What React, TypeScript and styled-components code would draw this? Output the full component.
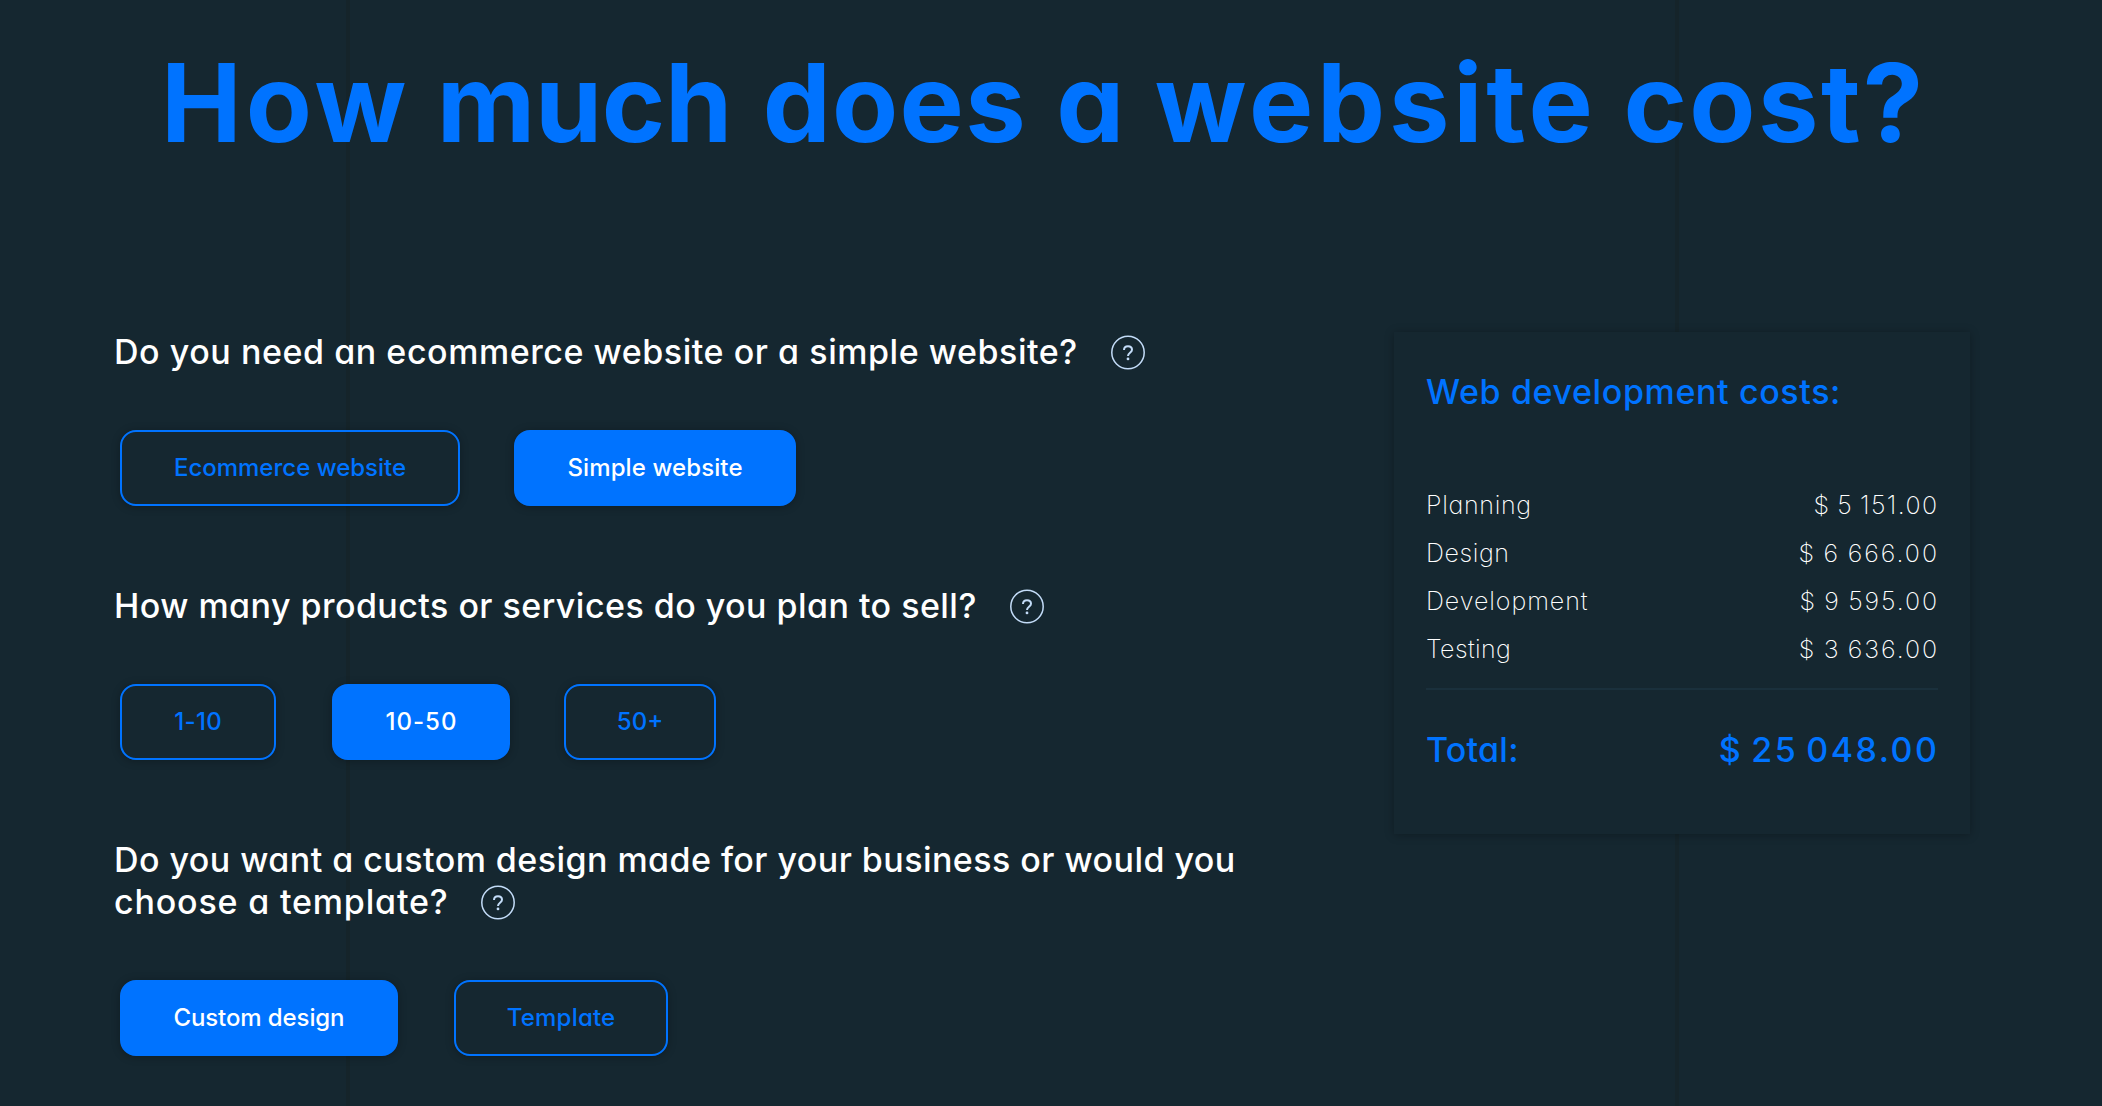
import React from 'react';
import styled, { createGlobalStyle, css } from 'styled-components';

const GlobalStyle = createGlobalStyle`
  * {
    box-sizing: border-box;
  }

  body {
    margin: 0;
    background: #152730;
    color: #fff;
    font-family: Inter, Lato, sans-serif;
    font-feature-settings: 'cv11';
  }
`;

const Page = styled.main`
  height: 1106px;
  overflow: hidden;
  background:
    linear-gradient(#15242a, #15242a) 346px 0 / 4px 100% no-repeat,
    linear-gradient(#15242a, #15242a) 1675px 0 / 4px 100% no-repeat,
    #152730;
`;

const Title = styled.h1`
  display: flex;
  gap: 30.5px;
  height: 331px;
  margin: 0;
  padding: 37px 0 0 161px;
  color: #0073ff;
  font-size: 108px;
  line-height: 131px;
  font-weight: 700;
  white-space: nowrap;
`;

interface SpacedProps {
  readonly $spacing?: number;
  readonly $wordSpacing?: number;
}

// The negative margin takes back the spacing after the last letter.
const Spaced = styled.span<SpacedProps>`
  margin-right: ${props => -(props.$spacing ?? 0)}px;
  letter-spacing: ${props => props.$spacing ?? 0}px;
  word-spacing: ${props => props.$wordSpacing ?? 0}px;
`;

const Columns = styled.div`
  display: flex;
  align-items: flex-start;
  justify-content: space-between;
  padding: 0 132px 0 114px;
`;

const Questions = styled.div`
  width: 1160px;
`;

const Question = styled.section`
  margin-bottom: 79px;
`;

const QuestionTitle = styled.h2`
  margin: 0 0 57px;
  font-size: 34px;
  line-height: 42px;
  font-weight: 500;
  white-space: nowrap;
`;

const HelpIcon = styled.svg`
  width: 36px;
  height: 36px;
  margin-left: 32.5px;
  vertical-align: -7px;
`;

const Options = styled.div`
  display: flex;
  gap: 54px;
  padding-left: 6px;
`;

interface OptionProps {
  readonly $width: number;
  readonly $offset?: number;
  readonly $active?: boolean;
}

const Option = styled.button<OptionProps>`
  width: ${props => props.$width}px;
  height: 76px;
  margin-left: ${props => props.$offset ?? 0}px;
  padding: 0 0 1px;
  border: 2px solid #0073ff;
  border-radius: 16px;
  background: transparent;
  box-shadow: 0 1px 8px rgba(0, 0, 0, 0.28);
  color: #0073ff;
  font: inherit;
  font-size: 24px;
  font-weight: 500;

  ${props =>
    props.$active &&
    css`
      background: #0073ff;
      color: #fff;
    `}
`;

const Summary = styled.aside`
  width: 576px;
  height: 502px;
  margin-top: 1px;
  padding: 36px 32px;
  background: #152730;
  box-shadow: 0 1px 9px rgba(0, 0, 0, 0.28);
`;

const SummaryTitle = styled.h3`
  margin: 0 0 65px;
  color: #0073ff;
  font-size: 34px;
  line-height: 48px;
  font-weight: 500;
`;

const CostRow = styled.div`
  display: flex;
  justify-content: space-between;
  font-size: 25px;
  line-height: 48px;
  font-weight: 250;
`;

const TotalRow = styled(CostRow)`
  margin-top: 15px;
  padding-top: 36px;
  border-top: 2px solid #1a303c;
  color: #0073ff;
  font-size: 34px;
  font-weight: 500;
`;

const Price = styled(Spaced)`
  padding-right: 1px;
`;

const titleWords = [
  { text: 'How', spacing: 4 },
  { text: 'much', spacing: -0.4 },
  { text: 'does', spacing: 1.3 },
  { text: 'a', spacing: 0 },
  { text: 'website', spacing: 3.8 },
  { text: 'cost?', spacing: 2.4 },
];

const questions = [
  {
    lines: [{ text: 'Do you need an ecommerce website or a simple website?', spacing: 0.55 }],
    options: [
      { label: 'Ecommerce website', width: 340 },
      { label: 'Simple website', width: 282, spacing: 0.1, active: true },
    ],
  },
  {
    lines: [{ text: 'How many products or services do you plan to sell?', spacing: 0.46 }],
    options: [
      { label: '1-10', width: 156, spacing: 0.4 },
      { label: '10-50', width: 178, offset: 2, spacing: 1, active: true },
      { label: '50+', width: 152 },
    ],
  },
  {
    lines: [
      { text: 'Do you want a custom design made for your business or would you', spacing: 0.45 },
      { text: 'choose a template?', spacing: 0.82 },
    ],
    options: [
      { label: 'Custom design', width: 278, spacing: -0.1, active: true },
      { label: 'Template', width: 214, offset: 2, spacing: 0.2 },
    ],
  },
];

const costs = [
  { label: 'Planning', spacing: 0.7, price: '$ 5 151.00', priceSpacing: 1.4 },
  { label: 'Design', spacing: 0.6, price: '$ 6 666.00', priceSpacing: 2 },
  { label: 'Development', spacing: 0.95, price: '$ 9 595.00', priceSpacing: 1.9 },
  { label: 'Testing', spacing: 0.4, price: '$ 3 636.00', priceSpacing: 1.9 },
];

const Help = () => (
  <HelpIcon viewBox="0 0 36 36" fill="none" stroke="#c3dcf8" strokeWidth="1.5">
    <circle cx="18" cy="17.5" r="16.2" />
    <path d="M14 14.9c0-2.3 1.6-3.7 4-3.7s4 1.4 4 3.5c0 3-4 3.2-4 6.2" strokeWidth="2" />
    <circle cx="18" cy="23.9" r="1.4" fill="#c3dcf8" stroke="none" />
  </HelpIcon>
);

const App = () => (
  <>
    <GlobalStyle />
    <Page>
      <Title>
        {titleWords.map(({ text, spacing }) => (
          <Spaced key={text} $spacing={spacing}>
            {text}
          </Spaced>
        ))}
      </Title>
      <Columns>
        <Questions>
          {questions.map(({ lines, options }) => (
            <Question key={lines[0].text}>
              <QuestionTitle>
                {lines.map(({ text, spacing }, index) => (
                  <React.Fragment key={text}>
                    {index > 0 && <br />}
                    <Spaced $spacing={spacing}>{text}</Spaced>
                  </React.Fragment>
                ))}
                <Help />
              </QuestionTitle>
              <Options>
                {options.map(({ label, width, offset, spacing, active }: any) => (
                  <Option key={label} $width={width} $offset={offset} $active={active}>
                    <Spaced $spacing={spacing}>{label}</Spaced>
                  </Option>
                ))}
              </Options>
            </Question>
          ))}
        </Questions>
        <Summary>
          <SummaryTitle>
            <Spaced $spacing={0.62}>Web development costs:</Spaced>
          </SummaryTitle>
          {costs.map(({ label, spacing, price, priceSpacing }) => (
            <CostRow key={label}>
              <Spaced $spacing={spacing}>{label}</Spaced>
              <Price $spacing={priceSpacing} $wordSpacing={-1.5}>
                {price}
              </Price>
            </CostRow>
          ))}
          <TotalRow>
            <Spaced $spacing={0.25}>Total:</Spaced>
            <Price $spacing={2.5} $wordSpacing={-3.5}>
              $ 25 048.00
            </Price>
          </TotalRow>
        </Summary>
      </Columns>
    </Page>
  </>
);

export default App;
